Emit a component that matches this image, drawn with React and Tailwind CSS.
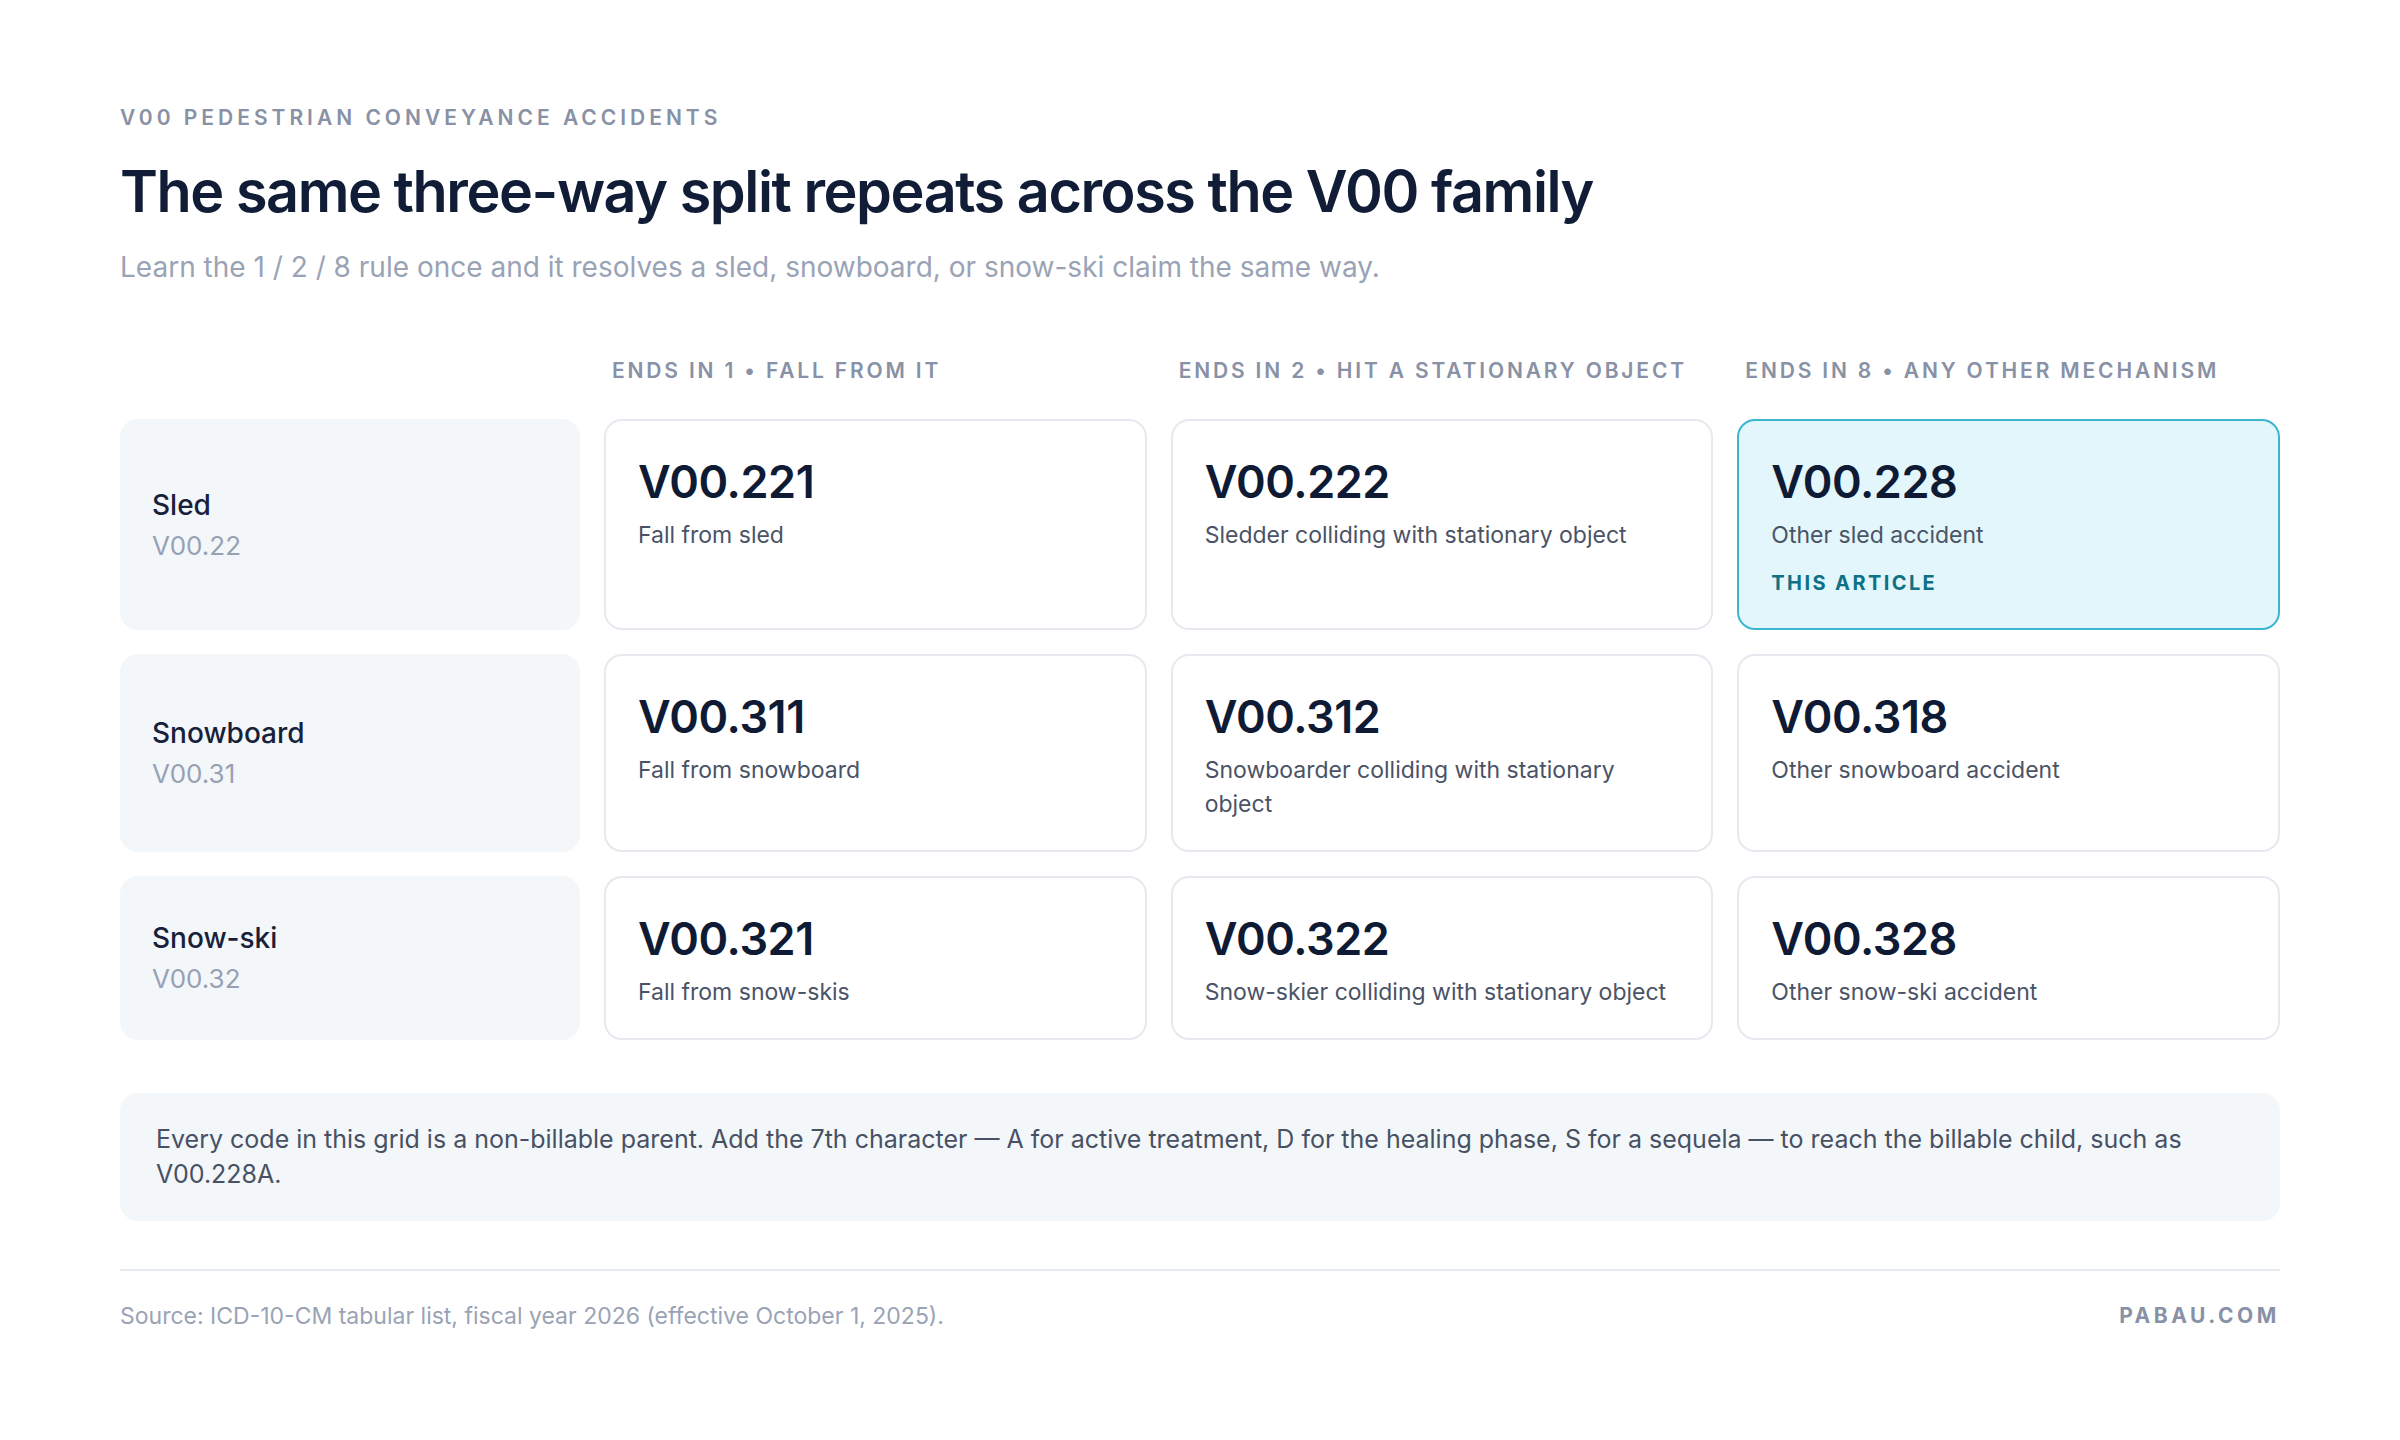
import React from "react";

const rows = [
  {
    name: "Sled",
    code: "V00.22",
    cells: [
      { code: "V00.221", desc: "Fall from sled" },
      { code: "V00.222", desc: "Sledder colliding with stationary object" },
      { code: "V00.228", desc: "Other sled accident", highlight: true },
    ],
  },
  {
    name: "Snowboard",
    code: "V00.31",
    cells: [
      { code: "V00.311", desc: "Fall from snowboard" },
      { code: "V00.312", desc: "Snowboarder colliding with stationary object" },
      { code: "V00.318", desc: "Other snowboard accident" },
    ],
  },
  {
    name: "Snow-ski",
    code: "V00.32",
    cells: [
      { code: "V00.321", desc: "Fall from snow-skis" },
      { code: "V00.322", desc: "Snow-skier colliding with stationary object" },
      { code: "V00.328", desc: "Other snow-ski accident" },
    ],
  },
];

const headers = [
  "ENDS IN 1 • FALL FROM IT",
  "ENDS IN 2 • HIT A STATIONARY OBJECT",
  "ENDS IN 8 • ANY OTHER MECHANISM",
];

function CodeCard({ code, desc, highlight }) {
  return (
    <div
      className={
        highlight
          ? "rounded-[18px] border-2 border-[#3cb6cf] bg-[#e2f6fb] px-8 pt-[35px] pb-[29px]"
          : "rounded-[18px] border-2 border-[#e6e9ef] bg-white px-8 pt-[35px] pb-[29px]"
      }
    >
      <div className="text-[45px] leading-[52px] font-semibold tracking-[-0.01em] text-[#0f1b35]">
        {code}
      </div>
      <div className="mt-[10px] text-[23px] leading-[34px] text-[#4a5366]">
        {desc}
      </div>
      {highlight && (
        <div className="mt-[15px] text-[20px] leading-[32px] font-bold tracking-[0.12em] text-[#0e7186]">
          THIS ARTICLE
        </div>
      )}
    </div>
  );
}

export default function App() {
  return (
    <div
      className="w-[2400px] h-[1440px] bg-white px-[120px] pt-[106px]"
      style={{ fontFamily: "Inter, 'Noto Sans', sans-serif" }}
    >
      <div className="text-[21px] leading-[24px] font-semibold tracking-[0.19em] text-[#8891a5]">
        V00 PEDESTRIAN CONVEYANCE ACCIDENTS
      </div>
      <h1 className="mt-[25px] text-[57.5px] leading-[72px] font-semibold tracking-[-0.025em] text-[#111c36]">
        The same three-way split repeats across the V00 family
      </h1>
      <p className="mt-[22px] text-[28px] leading-[36px] text-[#9aa3b5]">
        Learn the 1 / 2 / 8 rule once and it resolves a sled, snowboard, or snow-ski claim the same way.
      </p>

      <div className="mt-[74px] grid grid-cols-[460px_1fr_1fr_1fr] gap-x-6">
        <div />
        {headers.map((h) => (
          <div
            key={h}
            className="pl-2 text-[21px] leading-[24px] font-semibold tracking-[0.135em] text-[#8891a5] whitespace-nowrap"
          >
            {h}
          </div>
        ))}
      </div>

      <div className="mt-[36px] grid grid-cols-[460px_1fr_1fr_1fr] gap-6">
        {rows.map((r) => (
          <React.Fragment key={r.name}>
            <div className="rounded-[18px] bg-[#f3f7fa] px-8 flex flex-col justify-center">
              <div className="text-[28px] leading-[36px] font-medium text-[#17213a]">
                {r.name}
              </div>
              <div className="mt-[6px] text-[26px] leading-[34px] text-[#98a1b3]">
                {r.code}
              </div>
            </div>
            {r.cells.map((c) => (
              <CodeCard key={c.code} {...c} />
            ))}
          </React.Fragment>
        ))}
      </div>

      <div className="mt-[53px] rounded-[18px] bg-[#f3f7fa] px-[36px] py-[29px] text-[25px] leading-[35px] text-[#475163]">
        Every code in this grid is a non-billable parent. Add the 7th character — A for active treatment, D for the healing phase, S for a sequela — to reach the billable child, such as V00.228A.
      </div>

      <div className="mt-[48px] h-[2px] bg-[#e6ebf1]" />

      <div className="mt-[31px] flex items-center justify-between">
        <div className="text-[23px] leading-[28px] text-[#9aa3b5]">
          Source: ICD-10-CM tabular list, fiscal year 2026 (effective October 1, 2025).
        </div>
        <div className="text-[21px] leading-[28px] font-bold tracking-[0.17em] text-[#8891a5]">
          PABAU.COM
        </div>
      </div>
    </div>
  );
}
